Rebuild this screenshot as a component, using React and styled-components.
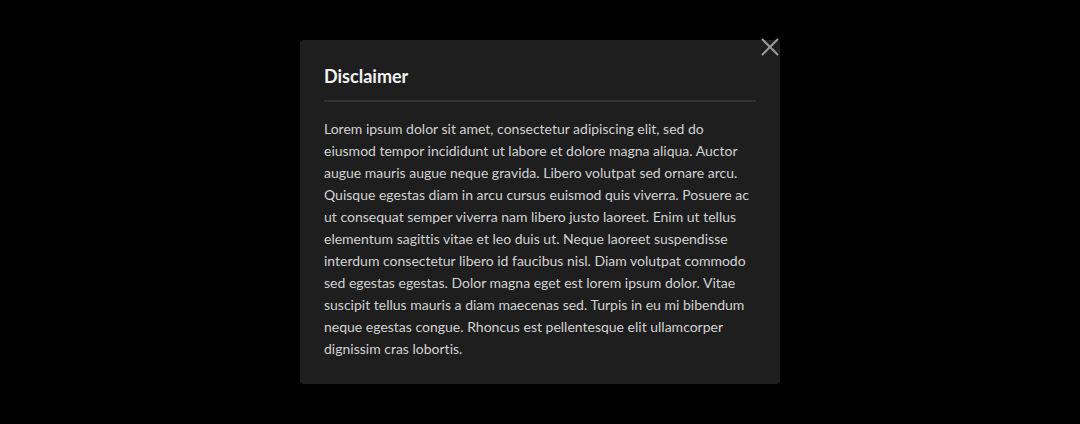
import React from "react";
import styled, { createGlobalStyle } from "styled-components";

const GlobalStyle = createGlobalStyle`
  html, body {
    margin: 0;
    padding: 0;
    background: #000;
  }
  body {
    font-family: "Lato", "Open Sans", sans-serif;
    font-variant-ligatures: none;
  }
`;

const Page = styled.div`
  width: 1080px;
  height: 424px;
  display: flex;
  justify-content: center;
  align-items: flex-start;
  padding-top: 40px;
  box-sizing: border-box;
  background: #000;
`;

const Dialog = styled.section`
  position: relative;
  width: 480px;
  box-sizing: border-box;
  padding: 24px;
  background: #1e1e1e;
  border-radius: 4px;
`;

const Title = styled.h2`
  margin: 0;
  font-size: 18px;
  line-height: 24px;
  font-weight: 700;
  color: #f2f2f2;
`;

const Divider = styled.hr`
  margin: 12px 0 16px;
  border: none;
  height: 2px;
  background: #343434;
`;

const Body = styled.p`
  margin: 0;
  font-size: 14px;
  line-height: 22px;
  color: #d2d2d2;
`;

const Line = styled.span`
  display: block;
  white-space: nowrap;
`;

const CloseButton = styled.button`
  position: absolute;
  top: -3px;
  right: 0;
  width: 20px;
  height: 20px;
  padding: 0;
  border: none;
  background: transparent;
  cursor: pointer;
  display: flex;
  align-items: center;
  justify-content: center;
`;

const lines = [
  "Lorem ipsum dolor sit amet, consectetur adipiscing elit, sed do",
  "eiusmod tempor incididunt ut labore et dolore magna aliqua. Auctor",
  "augue mauris augue neque gravida. Libero volutpat sed ornare arcu.",
  "Quisque egestas diam in arcu cursus euismod quis viverra. Posuere ac",
  "ut consequat semper viverra nam libero justo laoreet. Enim ut tellus",
  "elementum sagittis vitae et leo duis ut. Neque laoreet suspendisse",
  "interdum consectetur libero id faucibus nisl. Diam volutpat commodo",
  "sed egestas egestas. Dolor magna eget est lorem ipsum dolor. Vitae",
  "suscipit tellus mauris a diam maecenas sed. Turpis in eu mi bibendum",
  "neque egestas congue. Rhoncus est pellentesque elit ullamcorper",
  "dignissim cras lobortis.",
];

export default function App() {
  return (
    <>
      <GlobalStyle />
      <Page>
        <Dialog>
          <CloseButton aria-label="Close">
            <svg width="18" height="18" viewBox="0 0 18 18">
              <path
                d="M1.5 1.5 L16.5 16.5 M16.5 1.5 L1.5 16.5"
                stroke="#9b9b9b"
                strokeWidth="2"
                strokeLinecap="round"
              />
            </svg>
          </CloseButton>
          <Title>Disclaimer</Title>
          <Divider />
          <Body>
            {lines.map((line, i) => (
              <Line key={i}>{line}</Line>
            ))}
          </Body>
        </Dialog>
      </Page>
    </>
  );
}
